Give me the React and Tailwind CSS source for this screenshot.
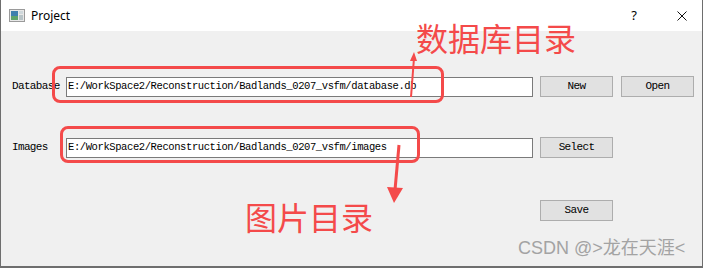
import React from 'react';

const mono = { fontFamily: '"Liberation Mono", "DejaVu Sans Mono", monospace' };

const Button = ({ children, className = '' }) => (
  <button
    className={`h-[21px] w-[73px] border border-[#adadad] bg-[#e1e1e1] text-[11px] tracking-[-0.65px] text-black ${className}`}
    style={mono}
  >
    {children}
  </button>
);

const PathInput = ({ value }) => (
  <div
    className="flex h-[20px] w-[467px] items-center border border-[#7a7a7a] bg-white pt-[1px] pl-[1px] text-[10.5px] tracking-[-0.4px] text-black"
    style={mono}
  >
    {value}
  </div>
);

const App = () => {
  return (
    <div className="relative h-[268px] w-[707px] overflow-hidden bg-white">
      <div className="flex h-[268px] w-[703px] flex-col border-r border-b-2 border-l border-[#6e6e6e]">
        {/* Title bar */}
        <div className="flex h-[31px] items-center bg-white">
          <svg width="16" height="13" viewBox="0 0 16 13" className="ml-[8px]">
            <rect x="0.5" y="0.5" width="15" height="12" fill="#e8e8e8" stroke="#9a9a9a" />
            <rect x="2" y="2" width="7" height="9" fill="#3f7fae" />
            <rect x="2" y="7" width="7" height="4" fill="#5fa36a" />
            <rect x="10" y="2" width="4" height="3" fill="#cfd8dc" />
            <rect x="10" y="6" width="4" height="5" fill="#b8c4c8" />
          </svg>
          <span
            className="ml-[6px] text-[12px] text-black"
            style={{ fontFamily: '"Noto Sans", "Liberation Sans", sans-serif' }}
          >
            Project
          </span>
          <span
            className="ml-auto text-[13px] text-black"
            style={{ fontFamily: '"Noto Sans", "Liberation Sans", sans-serif' }}
          >
            ?
          </span>
          <svg width="10" height="10" viewBox="0 0 10 10" className="mr-[15px] ml-[40px]">
            <path d="M0.5 0.5 L9.5 9.5 M9.5 0.5 L0.5 9.5" stroke="#111" strokeWidth="1" />
          </svg>
        </div>

        {/* Client area */}
        <div className="flex flex-1 flex-col bg-[#f0f0f0] pl-[11px]">
          <div className="mt-[45px] flex h-[21px] items-center">
            <span className="w-[54px] text-[11px] tracking-[-0.65px] text-black" style={mono}>
              Database
            </span>
            <PathInput value="E:/WorkSpace2/Reconstruction/Badlands_0207_vsfm/database.db" />
            <Button className="ml-[7px]">New</Button>
            <Button className="ml-[8px] w-[72px]">Open</Button>
          </div>

          <div className="mt-[40px] flex h-[21px] items-center">
            <span className="w-[54px] text-[11px] tracking-[-0.65px] text-black" style={mono}>
              Images
            </span>
            <PathInput value="E:/WorkSpace2/Reconstruction/Badlands_0207_vsfm/images" />
            <Button className="ml-[7px]">Select</Button>
          </div>

          <div className="mt-[42px] flex h-[21px] items-center pl-[528px]">
            <Button className="text-[10px]">Save</Button>
          </div>
        </div>
      </div>

      {/* Annotations */}
      <div className="absolute top-[66px] left-[52px] h-[37px] w-[392px] rounded-[8px] border-[3px] border-[#f44a4a]" />
      <div className="absolute top-[126px] left-[60px] h-[37px] w-[360px] rounded-[8px] border-[3px] border-[#f44a4a]" />

      <svg className="absolute top-0 left-0" width="707" height="268" viewBox="0 0 707 268">
        <path d="M411 97 L414 58" stroke="#f44a4a" strokeWidth="2" fill="none" />
        <path d="M410 61 L414 52 L417 61 Z" fill="#f44a4a" />
        <path d="M399 145 L395 190" stroke="#f44a4a" strokeWidth="3" fill="none" />
        <path d="M387 187 L403 188 L394 203 Z" fill="#f44a4a" />
      </svg>

      <div
        className="absolute top-[17px] left-[416px] text-[32px] leading-[40px] text-[#f44a4a]"
        style={{ fontFamily: '"Noto Sans CJK SC", sans-serif' }}
      >
        数据库目录
      </div>
      <div
        className="absolute top-[196px] left-[245px] text-[32px] leading-[40px] text-[#f44a4a]"
        style={{ fontFamily: '"Noto Sans CJK SC", sans-serif' }}
      >
        图片目录
      </div>

      <div
        className="absolute top-[237px] left-[518px] text-[18px] leading-[22px] text-[#a3a3a3]"
        style={{ fontFamily: '"Liberation Sans", "Noto Sans CJK SC", sans-serif' }}
      >
        CSDN @&gt;龙在天涯&lt;
      </div>
    </div>
  );
};

export default App;
